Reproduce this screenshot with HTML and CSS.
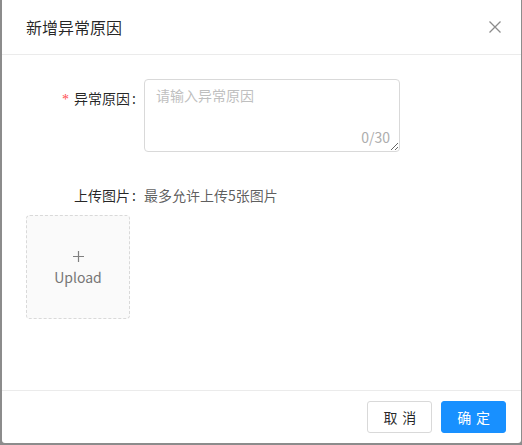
FILE: index.html
```html
<!DOCTYPE html>
<html lang="zh-CN">
<head>
<meta charset="utf-8">
<title>新增异常原因</title>
<link rel="stylesheet" href="styles.css">
</head>
<body>
<div class="modal">
  <div class="modal-header">
    <div class="modal-title">新增异常原因</div>
    <button class="modal-close" aria-label="Close">
      <svg width="12" height="12" viewBox="0 0 12 12"><path d="M0.5 0.5L11.5 11.5M11.5 0.5L0.5 11.5" stroke="#8c8c8c" stroke-width="1.3" fill="none"/></svg>
    </button>
  </div>
  <div class="modal-body">
    <div class="form-row">
      <label class="form-label required">异常原因</label>
      <div class="form-control">
        <div class="textarea-wrap">
          <textarea class="textarea" placeholder="请输入异常原因" maxlength="30"></textarea>
          <span class="count">0/30</span>
        </div>
      </div>
    </div>
    <div class="form-row row-upload">
      <label class="form-label">上传图片</label>
      <div class="form-text">最多允许上传5张图片</div>
    </div>
    <div class="upload-card">
      <svg class="plus" width="11" height="11" viewBox="0 0 11 11"><path d="M5.5 0V11M0 5.5H11" stroke="#7f7f7f" stroke-width="1.2" fill="none"/></svg>
      <div class="upload-text">Upload</div>
    </div>
  </div>
  <div class="modal-footer">
    <button class="btn btn-default"><span>取消</span></button>
    <button class="btn btn-primary"><span>确定</span></button>
  </div>
</div>
</body>
</html>
```
FILE: styles.css
```css
* { box-sizing: border-box; }
html, body {
  margin: 0;
  padding: 0;
  height: 100%;
}
body {
  background: #8c8c8c;
  overflow: hidden;
  font-family: "Noto Sans CJK SC", "Noto Sans", sans-serif;
  font-size: 14px;
  color: rgba(0, 0, 0, 0.85);
}
.modal {
  margin-left: 2px;
  width: 519px;
  height: 443px;
  background: #fff;
  border-radius: 0 0 3px 3px;
  display: flex;
  flex-direction: column;
}
.modal-header {
  display: flex;
  align-items: center;
  justify-content: space-between;
  padding: 16px 24px;
  border-bottom: 1px solid #ebebeb;
}
.modal-title {
  font-size: 16px;
  line-height: 22px;
  color: rgba(0, 0, 0, 0.85);
}
.modal-close {
  border: 0;
  background: none;
  padding: 0;
  margin-right: -4px;
  width: 12px;
  height: 12px;
  display: flex;
  cursor: pointer;
}
.modal-body {
  flex: 1;
  padding: 24px;
}
.form-row {
  display: flex;
  align-items: flex-start;
}
.form-label {
  width: 118px;
  flex: none;
  text-align: right;
  height: 38px;
  line-height: 38px;
  color: rgba(0, 0, 0, 0.85);
}
.form-label::after {
  content: ":";
  margin: 0 8px 0 2px;
}
.form-label.required::before {
  content: "*";
  color: #ff4d4f;
  margin-right: 5px;
  font-family: "Liberation Serif", serif;
  font-size: 14px;
}
.form-control {
  flex: none;
}
.textarea-wrap {
  position: relative;
  width: 256px;
  height: 73px;
}
.textarea {
  display: block;
  width: 256px;
  height: 73px;
  padding: 4px 11px;
  border: 1px solid #d9d9d9;
  border-radius: 4px;
  font-family: inherit;
  font-size: 14px;
  line-height: 22px;
  color: rgba(0, 0, 0, 0.85);
  resize: both;
  outline: none;
}
.textarea::placeholder {
  color: #bfbfbf;
}
.count {
  position: absolute;
  right: 10px;
  bottom: 4px;
  line-height: 22px;
  color: #adadad;
  pointer-events: none;
}
.row-upload {
  margin-top: 24px;
}
.form-text {
  line-height: 38px;
  color: rgba(0, 0, 0, 0.65);
}
.upload-card {
  margin-top: 1px;
  width: 104px;
  height: 104px;
  border: 1px dashed #d9d9d9;
  border-radius: 4px;
  background: #fafafa;
  display: flex;
  flex-direction: column;
  align-items: center;
  justify-content: center;
  padding-top: 5px;
}
.plus {
  display: block;
}
.upload-text {
  margin-top: 4px;
  line-height: 22px;
  color: #767676;
}
.modal-footer {
  display: flex;
  justify-content: flex-end;
  gap: 9px;
  padding: 10px 15px 10px;
  border-top: 1px solid #ebebeb;
}
.btn {
  height: 32px;
  padding: 0 15px;
  border-radius: 3px;
  font-family: inherit;
  font-size: 14px;
  line-height: 30px;
  border: 1px solid #d9d9d9;
  background: #fff;
  color: rgba(0, 0, 0, 0.85);
  cursor: pointer;
  white-space: nowrap;
  flex: none;
}
.btn span {
  display: inline-block;
  letter-spacing: 0.34em;
  margin-right: -0.34em;
}
.btn-primary {
  background: #1890ff;
  border-color: #1890ff;
  color: #fff;
}
```
